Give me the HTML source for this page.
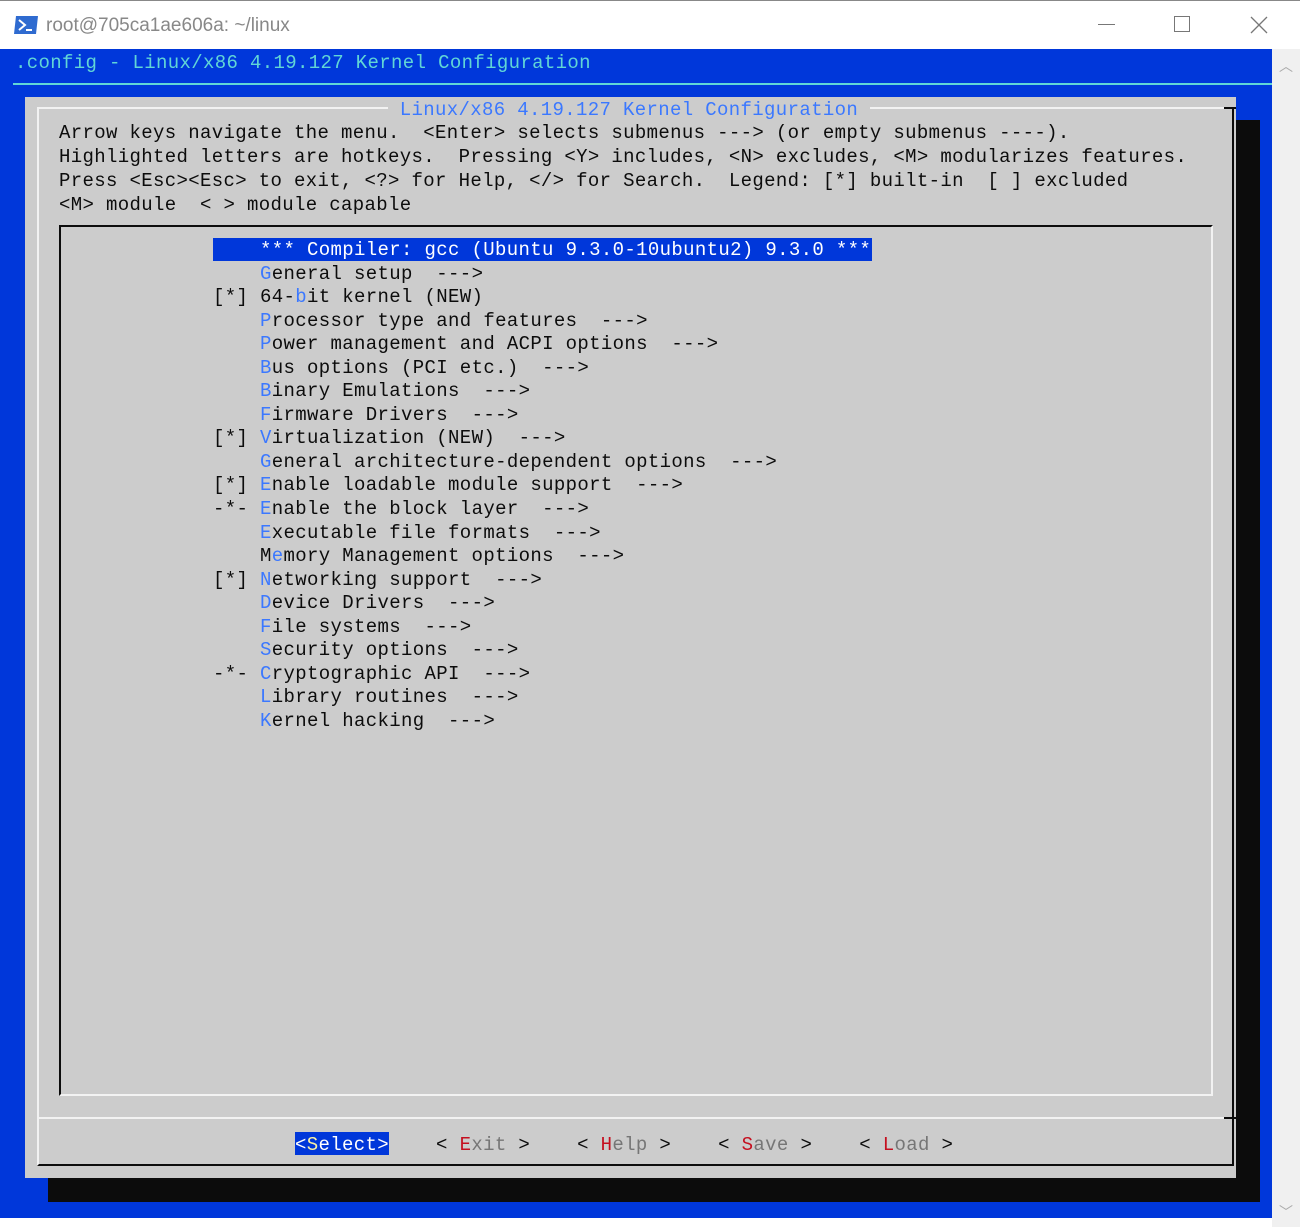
<!DOCTYPE html>
<html><head><meta charset="utf-8"><style>
*{margin:0;padding:0;box-sizing:border-box}
body{width:1300px;height:1227px;background:#fff;position:relative;overflow:hidden;font-family:"Liberation Sans",sans-serif}
.abs{position:absolute}
.t{position:absolute;white-space:pre;font-family:"Liberation Mono",monospace;font-size:19px;letter-spacing:0.35px;line-height:24px;color:#0c0c0c}
.h{color:#3b78ff}
.r{color:#c50f1f}
</style></head><body>
<div class="abs" style="left:0;top:0;width:1300px;height:49px;background:#fff;border-top:1px solid #888"></div>
<svg class="abs" style="left:13px;top:15px" width="26" height="20"><polygon points="3,1 25,1 23,19 1,19" fill="#2f6bd0"/><path d="M6,5 L12,10 L6,15" stroke="#fff" stroke-width="2" fill="none"/><path d="M13,15 L19,15" stroke="#fff" stroke-width="2"/></svg>
<div class="abs" style="left:46px;top:15px;font-size:19px;color:#888">root@705ca1ae606a: ~/linux</div>
<div class="abs" style="left:1098px;top:24px;width:17px;height:1px;background:#777"></div>
<div class="abs" style="left:1174px;top:16px;width:16px;height:16px;border:1px solid #777"></div>
<svg class="abs" style="left:1250px;top:16px" width="18" height="18"><path d="M1,1 L17,17 M17,1 L1,17" stroke="#777" stroke-width="1.3"/></svg>
<div class="abs" style="left:0;top:49px;width:1272px;height:1169px;background:#0037da"></div>
<div class="abs" style="left:1272px;top:49px;width:28px;height:1178px;background:#f0f0f0"></div>
<div class="abs" style="left:1279px;top:56px;font-size:14px;color:#aaa">︿</div>
<div class="abs" style="left:1279px;top:1202px;font-size:14px;color:#aaa">﹀</div>
<div class="abs" style="left:0;top:1218px;width:1272px;height:9px;background:#fff"></div>
<div class="t" style="left:15px;top:51px;color:#61d6d6">.config - Linux/x86 4.19.127 Kernel Configuration</div>
<div class="abs" style="left:13px;top:83px;width:1259px;height:2px;background:#61d6d6"></div>
<div class="abs" style="left:48px;top:120px;width:1212px;height:1082px;background:#0c0c0c"></div>
<div class="abs" style="left:25px;top:97px;width:1211px;height:1081px;background:#cccccc"></div>
<div class="abs" style="left:37px;top:107px;width:1197px;height:1059px;border-top:2px solid #f2f2f2;border-left:2px solid #f2f2f2;border-right:2px solid #0c0c0c;border-bottom:2px solid #0c0c0c"></div>
<div class="abs" style="left:1224px;top:107px;width:12px;height:2px;background:#0c0c0c"></div>
<div class="t" style="left:388px;top:98px;background:#cccccc;color:#3b78ff"> Linux/x86 4.19.127 Kernel Configuration </div>
<div class="t" style="left:59px;top:121px">Arrow keys navigate the menu.  &lt;Enter&gt; selects submenus ---&gt; (or empty submenus ----).
Highlighted letters are hotkeys.  Pressing &lt;Y&gt; includes, &lt;N&gt; excludes, &lt;M&gt; modularizes features.
Press &lt;Esc&gt;&lt;Esc&gt; to exit, &lt;?&gt; for Help, &lt;/&gt; for Search.  Legend: [*] built-in  [ ] excluded
&lt;M&gt; module  &lt; &gt; module capable</div>
<div class="abs" style="left:59px;top:225px;width:1154px;height:871px;border-top:2px solid #0c0c0c;border-left:2px solid #0c0c0c;border-right:2px solid #f2f2f2;border-bottom:2px solid #f2f2f2"></div>
<div class="abs" style="left:213px;top:238px;width:659px;height:23px;background:#0037da"></div>
<div class="t" style="left:213px;top:239px;line-height:23.55px">    <span style="color:#fff">*** Compiler: gcc (Ubuntu 9.3.0-10ubuntu2) 9.3.0 ***</span>
    <span class="h">G</span>eneral setup  ---&gt;
[*] 64-<span class="h">b</span>it kernel (NEW)
    <span class="h">P</span>rocessor type and features  ---&gt;
    <span class="h">P</span>ower management and ACPI options  ---&gt;
    <span class="h">B</span>us options (PCI etc.)  ---&gt;
    <span class="h">B</span>inary Emulations  ---&gt;
    <span class="h">F</span>irmware Drivers  ---&gt;
[*] <span class="h">V</span>irtualization (NEW)  ---&gt;
    <span class="h">G</span>eneral architecture-dependent options  ---&gt;
[*] <span class="h">E</span>nable loadable module support  ---&gt;
-*- <span class="h">E</span>nable the block layer  ---&gt;
    <span class="h">E</span>xecutable file formats  ---&gt;
    M<span class="h">e</span>mory Management options  ---&gt;
[*] <span class="h">N</span>etworking support  ---&gt;
    <span class="h">D</span>evice Drivers  ---&gt;
    <span class="h">F</span>ile systems  ---&gt;
    <span class="h">S</span>ecurity options  ---&gt;
-*- <span class="h">C</span>ryptographic API  ---&gt;
    <span class="h">L</span>ibrary routines  ---&gt;
    <span class="h">K</span>ernel hacking  ---&gt;</div>
<div class="abs" style="left:37px;top:1117px;width:1197px;height:2px;background:#f2f2f2"></div>
<div class="abs" style="left:1224px;top:1117px;width:12px;height:2px;background:#0c0c0c"></div>
<div class="abs" style="left:295px;top:1132px;width:94px;height:23px;background:#0037da"></div>
<div class="t" style="left:295px;top:1133px"><span style="color:#fff">&lt;<span style="color:#f9f1a5">S</span>elect&gt;</span>    &lt; <span class="r">E</span><span style="color:#767676">xit</span> &gt;    &lt; <span class="r">H</span><span style="color:#767676">elp</span> &gt;    &lt; <span class="r">S</span><span style="color:#767676">ave</span> &gt;    &lt; <span class="r">L</span><span style="color:#767676">oad</span> &gt;</div>
</body></html>
